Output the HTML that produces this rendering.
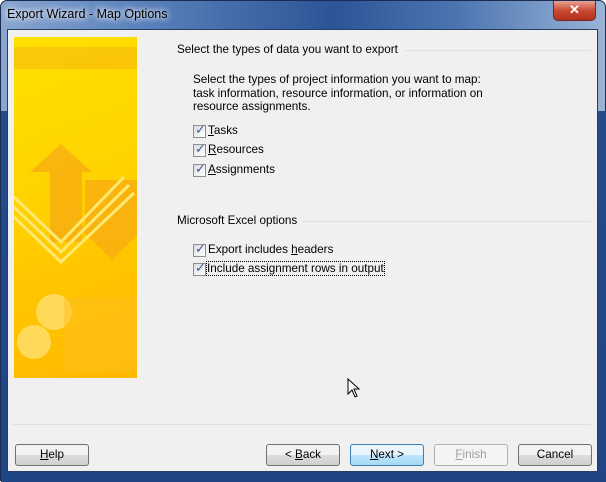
<!DOCTYPE html>
<html><head><style>
*{margin:0;padding:0;box-sizing:border-box}
body{width:606px;height:481px;overflow:hidden;font-family:"Liberation Sans",sans-serif;font-size:11.7px;color:#000;background:#fff}
.win{position:absolute;left:0;top:0;width:606px;height:481px;border-radius:7px 7px 0 0;background:linear-gradient(90deg,#8aa6cf 0%,#5f86bf 20%,#2b5597 55%,#4a74b0 75%,#9ab3d6 100%);border:1px solid #1a2d50}
.lower{position:absolute;left:0;top:110px;width:606px;height:371px;background:linear-gradient(#244b8c,#1f4585)}
.title{position:absolute;left:6px;top:6px;font-size:12.5px;color:#000;text-shadow:0 0 8px #fff,0 0 6px #fff}
.close{position:absolute;left:552px;top:0;width:43px;height:20px;border:1px solid #6b2a22;border-top:none;border-radius:0 0 5px 5px;background:linear-gradient(#e9a393,#c94a33 50%,#b3301c);color:#fff;font-weight:bold;text-align:center;font-size:13px;line-height:18px}
.client{position:absolute;left:6px;top:28px;width:591px;height:443px;background:#f0f0f0;border:1px solid #283f64}
.img{position:absolute;left:6px;top:7px;width:123px;height:341px;background:linear-gradient(160deg,#ffe000 0%,#ffd400 40%,#ffc400 70%,#ffb800 100%);overflow:hidden}
.grp{position:absolute}
.line{position:absolute;height:1px;background:#dcdfe3}
.cb{position:absolute;width:13px;height:13px;border:1px solid #8e8f8f;background:linear-gradient(135deg,#dcdcdc,#fff)}
.cb:after{content:"✓";position:absolute;left:1px;top:-3px;font-size:13px;color:#3b5aa0;font-weight:bold;font-family:"DejaVu Sans",sans-serif}
.lbl{position:absolute}
.btn{position:absolute;top:414px;height:22px;width:74px;border:1px solid #707070;border-radius:3px;background:linear-gradient(#f2f2f2 50%,#dddddd 50%,#cfcfcf);text-align:center;line-height:20px}
u{text-decoration:underline}
</style></head><body>
<div class="win"><div class="lower"></div>
<div class="title">Export Wizard - Map Options</div>
<div class="close">✕</div>
<div class="client">
 <div class="img">
  <div style="position:absolute;left:0;top:10px;width:123px;height:22px;background:rgba(240,160,20,.35)"></div>
  <svg width="123" height="341" style="position:absolute;left:0;top:0">
   <polygon points="16,135 47,107 78,135 68,135 68,205 36,205 36,135" fill="#f6a814" opacity=".7"/>
   <polygon points="71,143 123,143 123,190 131,190 98,223 65,190 71,190" fill="#f6a814" opacity=".7"/>
   <polyline points="0,160 47,205 110,140" stroke="#ffe870" stroke-width="3" fill="none"/>
   <polyline points="0,170 47,215 115,148" stroke="#ffe870" stroke-width="3" fill="none"/>
   <polyline points="0,180 47,225 120,156" stroke="#ffe870" stroke-width="3" fill="none"/>
   <circle cx="40" cy="275" r="18" fill="#ffe070" opacity=".8"/>
   <circle cx="20" cy="305" r="17" fill="#ffe070" opacity=".8"/>
   <rect x="50" y="260" width="73" height="75" fill="#ffbf20" opacity=".5"/>
  </svg>
 </div>
 <div class="grp" style="left:169px;top:13px">Select the types of data you want to export</div>
 <div class="line" style="left:397px;top:20px;width:186px"></div>
 <div class="grp" style="left:185px;top:43px;line-height:13.5px">Select the types of project information you want to map:<br>task information, resource information, or information on<br>resource assignments.</div>
 <div class="cb" style="left:185px;top:95px"></div><div class="lbl" style="left:200px;top:94px"><u>T</u>asks</div>
 <div class="cb" style="left:185px;top:114px"></div><div class="lbl" style="left:200px;top:113px"><u>R</u>esources</div>
 <div class="cb" style="left:185px;top:134px"></div><div class="lbl" style="left:200px;top:133px"><u>A</u>ssignments</div>
 <div class="grp" style="left:169px;top:184px">Microsoft Excel options</div>
 <div class="line" style="left:294px;top:191px;width:289px"></div>
 <div class="cb" style="left:185px;top:214px"></div><div class="lbl" style="left:200px;top:213px">Export includes <u>h</u>eaders</div>
 <div class="cb" style="left:185px;top:233px"></div><div class="lbl" style="left:199px;top:232px;outline:1px dotted #000">Include assignment rows in output</div>
 <svg style="position:absolute;left:339px;top:348px" width="14" height="22"><path d="M1,1 L1,16 L5,12 L8,19 L10,18 L7,11 L12,11 Z" fill="#fff" stroke="#000" stroke-width="1"/></svg>
 <div class="line" style="left:5px;top:394px;width:578px"></div>
 <div class="btn" style="left:7px"><u>H</u>elp</div>
 <div class="btn" style="left:258px">&lt; <u>B</u>ack</div>
 <div class="btn" style="left:342px;border-color:#3c7fb1;background:linear-gradient(#eaf6fd 50%,#bee6fd 50%,#a7d9f5)"><u>N</u>ext &gt;</div>
 <div class="btn" style="left:426px;border-color:#adb2b5;background:#f4f4f4;color:#a0a0a0"><u>F</u>inish</div>
 <div class="btn" style="left:510px">Cancel</div>
</div>
</div>
</body></html>
